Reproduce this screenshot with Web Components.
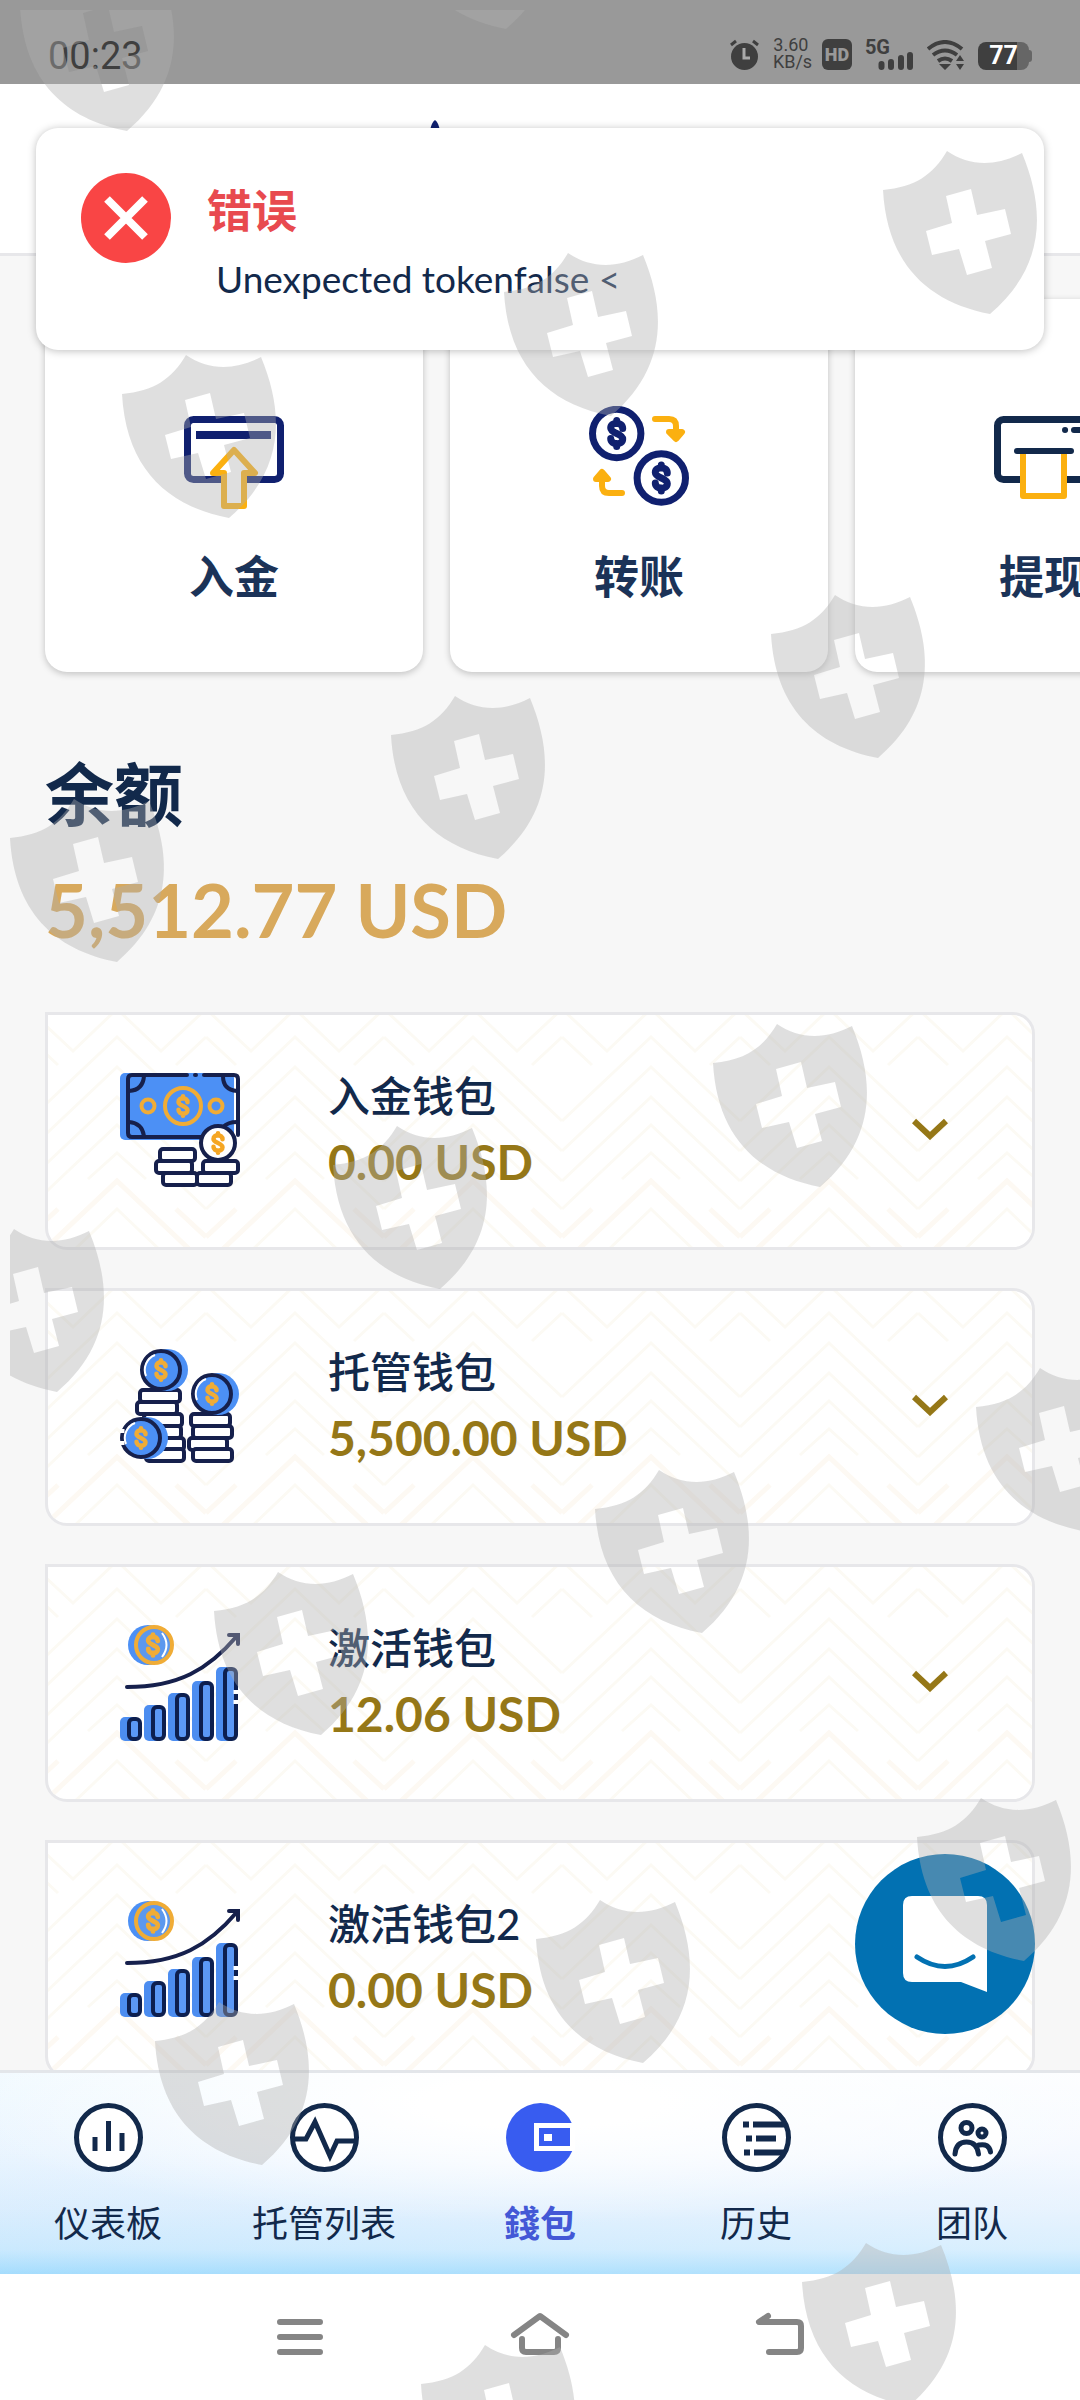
<!DOCTYPE html>
<html lang="zh-CN">
<head>
<meta charset="utf-8">
<meta name="viewport" content="width=device-width, initial-scale=1">
<title>錢包</title>
<style>
  :root {
    --navy: #12294b;
    --royal: #10206f;
    --orange: #fbb010;
    --gold: #957717;
    --line: #e7e7ea;
    --page: #f7f7f7;
  }
  body {
    margin: 0;
    color: var(--navy);
    font-family: Lato, "Noto Sans CJK SC", sans-serif;
  }
</style>
</head>
<body>
<wallet-app>
  <status-bar slot="status" time="00:23" speed="3.60" unit="KB/s" battery="77"></status-bar>
  <app-header slot="header"></app-header>

  <action-list>
    <action-card icon="deposit">入金</action-card>
    <action-card icon="transfer">转账</action-card>
    <action-card icon="withdraw">提现</action-card>
  </action-list>
  <balance-total amount="5,512.77 USD">余额</balance-total>
  <wallet-card icon="cash" amount="0.00 USD">入金钱包</wallet-card>
  <wallet-card icon="coins" amount="5,500.00 USD">托管钱包</wallet-card>
  <wallet-card icon="growth" amount="12.06 USD">激活钱包</wallet-card>
  <wallet-card icon="growth" amount="0.00 USD">激活钱包2</wallet-card>

  <tab-bar slot="tabs">
    <tab-item icon="dashboard">仪表板</tab-item>
    <tab-item icon="pulse">托管列表</tab-item>
    <tab-item icon="wallet" active>錢包</tab-item>
    <tab-item icon="history">历史</tab-item>
    <tab-item icon="team">团队</tab-item>
  </tab-bar>
  <system-nav slot="system"></system-nav>

  <toast-message slot="overlay" heading="错误">Unexpected tokenfalse &lt;</toast-message>
  <chat-launcher slot="overlay"></chat-launcher>
  <shield-overlay slot="overlay"></shield-overlay>
</wallet-app>

<script>
// dollar sign drawn around a centre point
function dollar(x, y, scale, color, width) {
  return `<path transform="translate(${x} ${y}) scale(${scale})" fill="none" stroke="${color}" stroke-width="${width}" stroke-linecap="round"
    d="M6 -5C6 -12 -6 -12 -6 -5.500C-6 0 6 0 6 5.500C6 12 -6 12 -6 5M0 -13V-10M0 10V13"/>`;
}

// outlined coin stack slices, each one [x, y, w]
function slices(list) {
  return list.map(([x, y, w]) => `<rect x="${x}" y="${y}" width="${w}" height="12" rx="3"/>`).join('');
}

function sideCoin(cx, cy, dash) {
  return `
    <circle cx="${cx + 6}" cy="${cy}" r="21" fill="#4c90f5"/>
    <circle cx="${cx}" cy="${cy}" r="19" fill="#4c90f5" stroke="#16204c" stroke-width="4" ${dash || ''}/>
    <path d="M${cx - 15} ${cy + 6}A16 16 0 0 1 ${cx - 6} ${cy - 15}" fill="none" stroke="#fff" stroke-width="2"/>
    ${dollar(cx, cy, 0.75, '#f0ac36', 6)}`;
}

function bar(x, top) {
  const h = 118 - top;
  return `
    <rect x="${x}" y="${top}" width="17" height="${h}" rx="5" fill="#4c8df0"/>
    <rect x="${x + 9}" y="${top + 2}" width="11" height="${h - 4}" rx="4" fill="#5b98f5" stroke="#0d1f4f" stroke-width="4"/>`;
}

const icons = {
  deposit: `<svg viewBox="0 0 100 106" width="100" height="106">
    <rect x="3.500" y="13.500" width="93" height="60" rx="6" fill="none" stroke="#10206f" stroke-width="7"/>
    <path d="M12 29H87" stroke="#10206f" stroke-width="8"/>
    <path d="M50 44L71 67H60V100H40V67H29Z" fill="#fff" stroke="#fbb010" stroke-width="6" stroke-linejoin="round"/></svg>`,
  transfer: `<svg viewBox="0 0 100 106" width="100" height="106">
    <g fill="none" stroke="#10206f" stroke-width="7"><circle cx="27.700" cy="27.500" r="24.200"/><circle cx="72.300" cy="72" r="24.200"/></g>
    ${dollar(27.7, 27.5, 1, '#10206f', 7)}${dollar(72.3, 72, 1, '#10206f', 7)}
    <g fill="none" stroke="#fbb010" stroke-width="6" stroke-linecap="round" stroke-linejoin="round">
      <path d="M66 13H80Q87 13 87 20V31"/><path d="M80 26L87 33L93 26Z"/>
      <path d="M33 87H20Q13 87 13 80V69"/><path d="M7 73L13 66L19 73Z"/></g></svg>`,
  withdraw: `<svg viewBox="0 0 100 106" width="100" height="106">
    <rect x="3.500" y="13.500" width="93" height="60" rx="6" fill="none" stroke="#12294b" stroke-width="7"/>
    <path d="M71 24H71.100M80 24H90" stroke="#12294b" stroke-width="6" stroke-linecap="round"/>
    <path d="M29 46V90H70V46" fill="#fff" stroke="#fbb010" stroke-width="6" stroke-linejoin="round"/>
    <path d="M23 45H77" stroke="#12294b" stroke-width="6" stroke-linecap="round"/></svg>`,
  cash: `<svg viewBox="0 -2 120 120" width="120" height="120">
    <rect x="0" y="2" width="114" height="67" rx="5" fill="#4c90f5"/>
    <g fill="none" stroke="#16204c" stroke-width="4" stroke-linecap="round">
      <path d="M67 4H12Q8 4 8 8V62Q8 66 12 66H82M75 4H76M84 4H114Q118 4 118 8V64"/>
      <path d="M9 20Q23 19 24 5M103 5Q103 19 117 20M9 51Q22 52 24 65M103 56Q108 51 117 51"/>
    </g>
    <g fill="none" stroke="#f0ac36" stroke-width="4"><circle cx="63" cy="35" r="18"/><circle cx="28" cy="35" r="6.500"/><circle cx="96" cy="35" r="6.500"/></g>
    ${dollar(63, 35, 0.75, '#f0ac36', 6)}
    <g fill="#fff" stroke="#16204c" stroke-width="4">
      ${slices([[40, 78, 35], [36, 90, 36], [43, 102, 34], [83, 90, 35], [77, 102, 34]])}
      <circle cx="98" cy="72" r="17"/></g>
    ${dollar(98, 72, 0.75, '#f5a623', 6)}</svg>`,
  coins: `<svg viewBox="0 -2 120 120" width="120" height="120">
    <g fill="#fff" stroke="#16204c" stroke-width="4">
      ${slices([[20, 43, 40], [17, 55, 40], [24, 67, 38], [30, 79, 31], [36, 91, 28], [26, 102, 38],
        [71, 67, 39], [73, 79, 39], [69, 91, 38], [73, 102, 39]])}</g>
    ${sideCoin(41, 23)}${sideCoin(92, 47)}${sideCoin(21, 91)}
    <path d="M2 82V86M2 94V98" stroke="#fff" stroke-width="5"/></svg>`,
  growth: `<svg viewBox="0 -2 120 120" width="120" height="120">
    <circle cx="28" cy="22" r="20" fill="#4c90f5"/>
    <circle cx="34" cy="22" r="18" fill="#5c98ee" stroke="#f0ac36" stroke-width="4"/>
    <path d="M42 10Q51 22 42 34" fill="none" stroke="#fff" stroke-width="2"/>
    ${dollar(33, 22, 0.8, '#f0ac36', 6)}
    <path d="M7 64C58 64 88 47 117 13M109 12H118V21" fill="none" stroke="#16204c" stroke-width="4" stroke-linecap="round"/>
    ${bar(0, 94)}${bar(24, 82)}${bar(48, 70)}${bar(72, 58)}${bar(96, 44)}
    <path d="M116 67V71M116 77V81" stroke="#fff" stroke-width="5"/></svg>`,
  dashboard: `<svg viewBox="0 0 69 69" width="69" height="69"><circle cx="34.500" cy="34.500" r="32" fill="#fff" stroke="currentColor" stroke-width="5"/>
    <path d="M21 34V48M34.500 18V48M48 30V48" stroke="currentColor" stroke-width="5"/></svg>`,
  pulse: `<svg viewBox="0 0 69 69" width="69" height="69"><circle cx="34.500" cy="34.500" r="32" fill="#fff" stroke="currentColor" stroke-width="5"/>
    <path d="M1 36H16L25 19L40 53L47 38H68" fill="none" stroke="currentColor" stroke-width="5"/></svg>`,
  wallet: `<svg viewBox="0 0 69 69" width="69" height="69"><circle cx="34.500" cy="34.500" r="34.500" fill="#385cf0"/>
    <path d="M69 22.500H30.500V45.500H69" fill="none" stroke="#fff" stroke-width="5"/>
    <path d="M64 20H69V48H64Z" fill="#fff"/><rect x="38" y="31" width="8" height="7" fill="#fff"/></svg>`,
  history: `<svg viewBox="0 0 69 69" width="69" height="69"><circle cx="34.500" cy="34.500" r="32" fill="#fff" stroke="currentColor" stroke-width="5"/>
    <path d="M21 21.500H27M31 21.500H64M24 35.500H30M34 35.500H54M22 49.500H28M32 49.500H63" stroke="currentColor" stroke-width="6"/></svg>`,
  team: `<svg viewBox="0 0 69 69" width="69" height="69"><circle cx="34.500" cy="34.500" r="32" fill="#fff" stroke="currentColor" stroke-width="5"/>
    <g fill="none" stroke="currentColor" stroke-width="5" stroke-linecap="round"><circle cx="28.500" cy="25" r="5.500"/><circle cx="44" cy="30" r="4"/>
    <path d="M17 51Q18 39 28.500 39Q39 39 40.500 51M41 42Q51 40 52.500 49"/></g></svg>`
};

class BaseElement extends HTMLElement {
  connectedCallback() {
    if (this.shadowRoot) return;
    this.attachShadow({ mode: 'open' });
    this.shadowRoot.innerHTML = this.template();
  }

  attr(name) {
    return this.getAttribute(name) || '';
  }
}

class WalletApp extends BaseElement {
  template() {
    return `
      <style>
        :host {
          position: relative;
          display: flex;
          flex-direction: column;
          height: 100vh;
          overflow: hidden;
          background: var(--page);
        }
        main {
          flex: 1;
          min-height: 0;
          overflow: hidden;
          box-sizing: border-box;
          padding: 43px 45px 0;
        }
      </style>
      <slot name="status"></slot>
      <slot name="header"></slot>
      <main><slot></slot></main>
      <slot name="tabs"></slot>
      <slot name="system"></slot>
      <slot name="overlay"></slot>
    `;
  }
}

class StatusBar extends BaseElement {
  template() {
    return `
      <style>
        :host {
          display: flex;
          align-items: flex-end;
          justify-content: space-between;
          box-sizing: border-box;
          height: 84px;
          padding: 0 48px 14px 48px;
          background: #999;
          color: #3f3f3f;
          font-family: Roboto, sans-serif;
        }
        time { font-size: 38px; line-height: 28px; }
        .right { display: flex; align-items: flex-end; gap: 13px; }
        .right svg { display: block; }
        .speed { width: 36px; font-size: 18px; line-height: 17px; text-align: center; }
        .hd {
          width: 30px;
          border-radius: 6px;
          background: #3f3f3f;
          color: #999;
          font-size: 18px;
          font-weight: 900;
          line-height: 31px;
          text-align: center;
        }
        .signal { display: flex; align-items: flex-end; }
        .signal b { align-self: flex-start; font-size: 20px; line-height: 17px; margin-right: -12px; }
        .battery { display: flex; align-items: center; }
        .battery span {
          width: 51px;
          border-radius: 8px;
          background: linear-gradient(90deg, #3f3f3f 76%, #666 76%);
          color: #fff;
          font-size: 25px;
          font-weight: 700;
          line-height: 28px;
          text-align: center;
        }
        .battery::after { content: ''; width: 3px; height: 12px; border-radius: 0 3px 3px 0; background: #666; }
      </style>
      <time>${this.attr('time')}</time>
      <div class="right">
        <svg width="31" height="31" viewBox="0 0 31 31"><circle cx="15.500" cy="17.500" r="13.500" fill="#3f3f3f"/>
          <path d="M2 6L7 2M29 6L24 2" stroke="#3f3f3f" stroke-width="3"/><path d="M15 9V19H21" fill="none" stroke="#aaa" stroke-width="3"/></svg>
        <div class="speed">${this.attr('speed')}<br>${this.attr('unit')}</div>
        <div class="hd">HD</div>
        <div class="signal"><b>5G</b>
          <svg width="36" height="31" viewBox="0 0 36 31"><path d="M3.500 25V28M13 23V28M23 19V28M32 16V28" stroke="#3f3f3f" stroke-width="6" stroke-linecap="round"/></svg></div>
        <svg width="38" height="30" viewBox="0 0 38 30"><g fill="none" stroke="#3f3f3f" stroke-width="4">
          <path d="M1 9Q18 -5 35 9M6 15Q18 6 30 15M11 21Q18 16 25 21"/></g>
          <path d="M12 24H24L18 30ZM29 21L33 15L37 21ZM29 24H37L33 30Z" fill="#3f3f3f"/></svg>
        <div class="battery"><span>${this.attr('battery')}</span></div>
      </div>
    `;
  }
}

class AppHeader extends BaseElement {
  template() {
    return `
      <style>
        :host {
          display: flex;
          justify-content: center;
          box-sizing: border-box;
          height: 172px;
          padding-top: 36px;
          background: #fff;
          border-bottom: 3px solid var(--line);
        }
        svg { width: 230px; height: 60px; }
      </style>
      <svg viewBox="0 0 230 60"><path d="M10 0Q17 5 15 30H5Q3 5 10 0Z" fill="#10206f"/></svg>
    `;
  }
}

class ActionList extends BaseElement {
  template() {
    return `
      <style>
        :host {
          display: flex;
          gap: 27px;
        }
      </style>
      <slot></slot>
    `;
  }
}

class ActionCard extends BaseElement {
  template() {
    return `
      <style>
        :host { flex: 0 0 378px; }
        button {
          display: flex;
          flex-direction: column;
          align-items: center;
          gap: 35px;
          box-sizing: border-box;
          width: 100%;
          padding: 107px 0 65px;
          border: 0;
          border-radius: 22px;
          background: #fff;
          box-shadow: 0 2px 7px rgba(0, 0, 0, 0.22);
          color: #1b3358;
          font: 700 45px/60px Lato, "Noto Sans CJK SC", sans-serif;
        }
        svg { display: block; }
      </style>
      <button type="button">${icons[this.attr('icon')]}<span><slot></slot></span></button>
    `;
  }
}

class BalanceTotal extends BaseElement {
  template() {
    return `
      <style>
        :host { display: block; margin: 83px 0 54px; }
        h1 { margin: 0 0 27px; font-size: 69px; line-height: 80px; font-weight: 700; }
        p { margin: 0; color: #d8a95c; font-size: 74px; line-height: 96px; font-weight: 700; }
      </style>
      <h1><slot></slot></h1>
      <p>${this.attr('amount')}</p>
    `;
  }
}

class WalletCard extends BaseElement {
  template() {
    return `
      <style>
        :host {
          position: relative;
          display: flex;
          align-items: center;
          gap: 88px;
          box-sizing: border-box;
          height: 238px;
          margin-bottom: 38px;
          padding: 0 84px 4px 72px;
          overflow: hidden;
          border: 3px solid var(--line);
          border-radius: 0 22px 22px 22px;
          background: #fff;
        }
        .pattern { position: absolute; inset: 0; width: 100%; height: 100%; }
        .icon, .text, button { position: relative; }
        .icon svg { display: block; }
        .text { flex: 1; }
        h2 { margin: 0 0 6px; font-size: 42px; line-height: 60px; font-weight: 500; }
        p { margin: 0; color: var(--gold); font-size: 48px; line-height: 60px; font-weight: 700; }
        button { padding: 0; border: 0; background: none; }
        button svg { display: block; }
      </style>
      <svg class="pattern" aria-hidden="true">
        <defs><pattern id="zigzag" width="178" height="236" patternUnits="userSpaceOnUse" x="-20">
          <g fill="none" stroke="#fcfaf4" stroke-width="3">
            <path d="M0 106L89 22L178 106M0 136L89 52L178 136M0 166L89 82L178 166M40 156L89 110L138 156M60 164L89 138L118 164"/>
            <path d="M0 -6L45 36L89 -6L133 36L178 -6M0 22L30 50M178 22L148 50"/>
            <path d="M40 156L0 194M138 156L178 194M45 236L89 194L133 236"/>
          </g>
          <path d="M0 250L89 166L178 250M0 222L30 194M178 222L148 194" fill="none" stroke="#fdf9f3" stroke-width="5"/>
        </pattern></defs>
        <rect width="100%" height="100%" fill="url(#zigzag)"/>
      </svg>
      <div class="icon">${icons[this.attr('icon')]}</div>
      <div class="text">
        <h2><slot></slot></h2>
        <p>${this.attr('amount')}</p>
      </div>
      <button type="button" aria-label="展开">
        <svg width="36" height="22" viewBox="0 0 36 22"><path d="M2 3L18 18L34 3" fill="none" stroke="#957717" stroke-width="6"/></svg>
      </button>
    `;
  }
}

class TabBar extends BaseElement {
  template() {
    return `
      <style>
        :host { display: block; }
        nav {
          display: grid;
          grid-template-columns: repeat(5, 1fr);
          box-sizing: border-box;
          height: 204px;
          padding-top: 30px;
          border-top: 3px solid #e3e6ea;
          background:
            radial-gradient(ellipse 55% 60% at 50% 15%, #fff 20%, rgba(255, 255, 255, 0)),
            linear-gradient(90deg, rgba(150, 215, 252, 0.1), rgba(255, 255, 255, 0.2)),
            linear-gradient(#fcfeff, #f3f8ff 40%, #e2f0fe 68%, #d0ebfe 88%, #a6ddfd);
        }
      </style>
      <nav><slot></slot></nav>
    `;
  }
}

class TabItem extends BaseElement {
  template() {
    const isActive = this.hasAttribute('active');
    return `
      <style>
        :host { display: block; }
        a {
          display: flex;
          flex-direction: column;
          align-items: center;
          gap: 29px;
          color: ${isActive ? '#4358d6' : 'var(--navy)'};
          font-size: 36px;
          line-height: 44px;
          font-weight: ${isActive ? 700 : 400};
          text-decoration: none;
        }
        svg { display: block; }
      </style>
      <a href="#${this.attr('icon')}" ${isActive ? 'aria-current="page"' : ''}>${icons[this.attr('icon')]}<span><slot></slot></span></a>
    `;
  }
}

class SystemNav extends BaseElement {
  template() {
    return `
      <style>
        :host {
          display: grid;
          grid-template-columns: repeat(3, 1fr);
          align-items: center;
          justify-items: center;
          box-sizing: border-box;
          height: 126px;
          padding: 0 calc(100% / 6);
          background: #fff;
        }
        button { padding: 0; border: 0; background: none; }
        svg { display: block; fill: none; stroke: #858585; stroke-width: 6; stroke-linecap: round; stroke-linejoin: round; }
      </style>
      <button type="button" aria-label="菜单"><svg width="60" height="60" viewBox="0 0 60 60"><path d="M10 15H50M10 30H50M10 45H50"/></svg></button>
      <button type="button" aria-label="主页"><svg width="60" height="60" viewBox="0 0 60 60"><path d="M4 28L30 9L56 28M12 32V41Q12 45 16 45H44Q48 45 48 41V32"/></svg></button>
      <button type="button" aria-label="返回"><svg width="60" height="60" viewBox="0 0 60 60"><path d="M18 9L9 15H47Q51 15 51 19V41Q51 45 47 45H19"/></svg></button>
    `;
  }
}

class ToastMessage extends BaseElement {
  template() {
    return `
      <style>
        :host {
          position: absolute;
          top: 128px;
          left: 36px;
          right: 36px;
          display: flex;
          align-items: flex-start;
          gap: 36px;
          box-sizing: border-box;
          height: 222px;
          padding: 45px;
          border-radius: 22px;
          background: #fff;
          box-shadow: 0 1px 8px rgba(0, 0, 0, 0.26);
        }
        svg { display: block; flex: none; }
        h2 { margin: 8px 0; color: #e84a4f; font-size: 45px; line-height: 60px; font-weight: 700; }
        p { margin: 0; padding-left: 9px; font-size: 37px; line-height: 60px; }
      </style>
      <svg width="90" height="90" viewBox="0 0 90 90"><circle cx="45" cy="45" r="45" fill="#f94545"/>
        <path d="M26 26L64 64M64 26L26 64" stroke="#fff" stroke-width="8"/></svg>
      <div role="alert">
        <h2>${this.attr('heading')}</h2>
        <p><slot></slot></p>
      </div>
    `;
  }
}

class ChatLauncher extends BaseElement {
  template() {
    return `
      <style>
        :host { position: absolute; right: 45px; bottom: 366px; }
        button {
          display: grid;
          place-items: center;
          width: 180px;
          height: 180px;
          padding: 0;
          border: 0;
          border-radius: 50%;
          background: #0271b2;
        }
      </style>
      <button type="button" aria-label="客服">
        <svg width="84" height="96" viewBox="0 0 84 96"><path d="M9 0H75Q84 0 84 9V96L58 86H9Q0 86 0 77V9Q0 0 9 0Z" fill="#fff"/>
          <path d="M14 61Q42 80 70 61" fill="none" stroke="#0271b2" stroke-width="5" stroke-linecap="round"/></svg>
      </button>
    `;
  }
}

class ShieldOverlay extends BaseElement {
  template() {
    const spots = [
      [20, -32], [399, -134], [883, 151], [504, 253], [122, 355], [771, 595], [391, 696],
      [10, 799], [713, 1024], [333, 1126], [-50, 1229], [976, 1368], [595, 1470], [214, 1572],
      [917, 1798], [536, 1900], [155, 2002], [802, 2243], [421, 2345]
    ];
    return `
      <style>
        :host {
          position: absolute;
          inset: 10px 0 0 10px;
          overflow: hidden;
          pointer-events: none;
        }
        svg { display: block; width: 100%; height: 100%; }
      </style>
      <svg aria-hidden="true">
        <defs><path id="shield" fill-rule="evenodd" d="M0 39C32 36 50 24 64 0C86 15 112 16 139 2C163 60 162 116 107 163C44 151 4 112 0 39Z
          M88 38L63 45L69 72L43 80L49 104L76 98L84 124L109 117L102 90L128 83L122 58L94 64Z"/></defs>
        <g fill="#afafaf" fill-opacity="0.4">
          ${spots.map(([x, y]) => `<use href="#shield" x="${x - 10}" y="${y - 10}"/>`).join('')}
        </g>
      </svg>
    `;
  }
}

customElements.define('wallet-app', WalletApp);
customElements.define('status-bar', StatusBar);
customElements.define('app-header', AppHeader);
customElements.define('action-list', ActionList);
customElements.define('action-card', ActionCard);
customElements.define('balance-total', BalanceTotal);
customElements.define('wallet-card', WalletCard);
customElements.define('tab-bar', TabBar);
customElements.define('tab-item', TabItem);
customElements.define('system-nav', SystemNav);
customElements.define('toast-message', ToastMessage);
customElements.define('chat-launcher', ChatLauncher);
customElements.define('shield-overlay', ShieldOverlay);
</script>
</body>
</html>
